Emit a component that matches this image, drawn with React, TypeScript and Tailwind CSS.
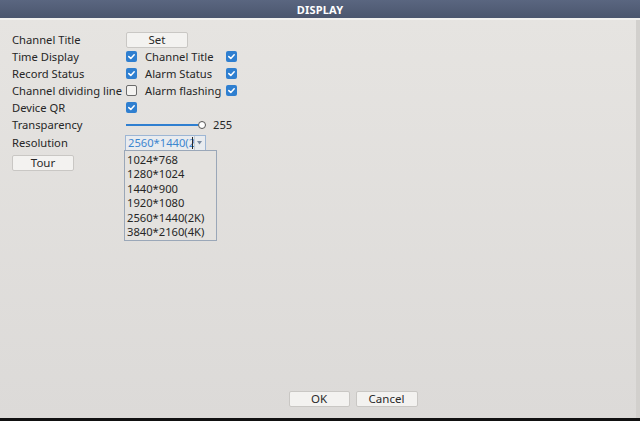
import React from "react";

const font = { fontFamily: '"Noto Sans", "Open Sans", sans-serif' };

function Check({ checked }: { checked: boolean }) {
  if (!checked)
    return <div className="shrink-0 w-[11px] h-[11px] rounded-[2px] border border-[#6b6b6b] bg-[#f4f3f1]" />;
  return (
    <div className="shrink-0 w-[11px] h-[11px] rounded-[2px] bg-[#2f7fd0] flex items-center justify-center">
      <svg width="9" height="9" viewBox="0 0 9 9">
        <path d="M1.8 4.6 L3.8 6.4 L7.2 2.8" stroke="white" strokeWidth="1.5" fill="none" strokeLinecap="round" strokeLinejoin="round" />
      </svg>
    </div>
  );
}

function Btn({ children, w }: { children: React.ReactNode; w: string }) {
  return (
    <div className={`${w} shrink-0 h-[16px] rounded-[2px] border border-[#c9c7c4] bg-[#f3f2f0] flex items-center justify-center text-[11.5px] text-[#2a2a2a] leading-none`}>
      {children}
    </div>
  );
}

function Label({ children, w }: { children: React.ReactNode; w: string }) {
  return <span className={`${w} shrink-0 whitespace-nowrap`}>{children}</span>;
}

export default function App() {
  return (
    <div className="w-[640px] h-[421px] flex flex-col bg-[#dfddda] text-[#262626] text-[11.2px] leading-none overflow-hidden" style={font}>
      <div className="h-[18px] bg-gradient-to-b from-[#5a6680] to-[#4b566e] flex items-center justify-center text-white font-bold text-[11px] tracking-[0.2px]">
        DISPLAY
      </div>
      <div className="h-[2px] bg-[#f2f1ef]" />
      <div className="flex-1 flex flex-col bg-gradient-to-b from-[#e6e4e1] to-[#dcdad8] border-r-[4px] border-[#d2d0cd]">
        <div className="pl-[12px] pt-[12px] flex flex-col">
          <div className="h-[17px] flex items-center -mt-[1px]">
            <Label w="w-[114px]">Channel Title</Label>
            <Btn w="w-[62px]">Set</Btn>
          </div>
          <div className="h-[17px] flex items-center">
            <Label w="w-[114px]">Time Display</Label>
            <Check checked />
            <Label w="w-[81px] ml-[8px]">Channel Title</Label>
            <Check checked />
          </div>
          <div className="h-[17px] flex items-center">
            <Label w="w-[114px]">Record Status</Label>
            <Check checked />
            <Label w="w-[81px] ml-[8px]">Alarm Status</Label>
            <Check checked />
          </div>
          <div className="h-[17px] flex items-center">
            <Label w="w-[114px]">Channel dividing line</Label>
            <Check checked={false} />
            <Label w="w-[81px] ml-[8px]">Alarm flashing</Label>
            <Check checked />
          </div>
          <div className="h-[17px] flex items-center">
            <Label w="w-[114px]">Device QR</Label>
            <Check checked />
          </div>
          <div className="h-[17px] flex items-center">
            <Label w="w-[114px]">Transparency</Label>
            <div className="w-[72px] h-[2px] bg-[#2f7fd0]" />
            <div className="w-[8px] h-[8px] rounded-full border border-[#555] bg-white" />
            <span className="ml-[7px]">255</span>
          </div>
          <div className="h-[20px] flex items-center">
            <Label w="w-[113px]">Resolution</Label>
            <div className="relative">
              <div className="w-[81px] h-[16px] border border-[#9db6d4] bg-[#e9ecef] flex items-center">
                <span className="pl-[2px] text-[#3d86cf] w-[67px] shrink-0 whitespace-nowrap">2560*1440(2</span>
                <div className="w-[1px] h-[12px] bg-[#2a2a2a] -ml-[1px]" />
                <div className="ml-[1px] h-[14px] w-[10px] flex items-center justify-center border-l border-[#c8cdd4]">
                  <svg width="5" height="4" viewBox="0 0 5 4"><path d="M0 0 L5 0 L2.5 3.5 Z" fill="#7a8aa0" /></svg>
                </div>
              </div>
              <div className="absolute left-[-1px] top-[15px] w-[93px] border border-[#9aa7b8] bg-[#e4e2df] py-[1px] flex flex-col z-10">
                {["1024*768", "1280*1024", "1440*900", "1920*1080", "2560*1440(2K)", "3840*2160(4K)"].map((t) => (
                  <div key={t} className="h-[14.5px] flex items-center pl-[2px] whitespace-nowrap">{t}</div>
                ))}
              </div>
            </div>
          </div>
          <div className="h-[17px] flex items-center mt-[1px]">
            <Btn w="w-[62px]">Tour</Btn>
          </div>
        </div>
        <div className="flex-1" />
        <div className="flex justify-center gap-[6px] pl-[70px] pb-[11px]">
          <Btn w="w-[61px]">OK</Btn>
          <Btn w="w-[62px]">Cancel</Btn>
        </div>
      </div>
      <div className="h-[3px] bg-[#111]" />
    </div>
  );
}
